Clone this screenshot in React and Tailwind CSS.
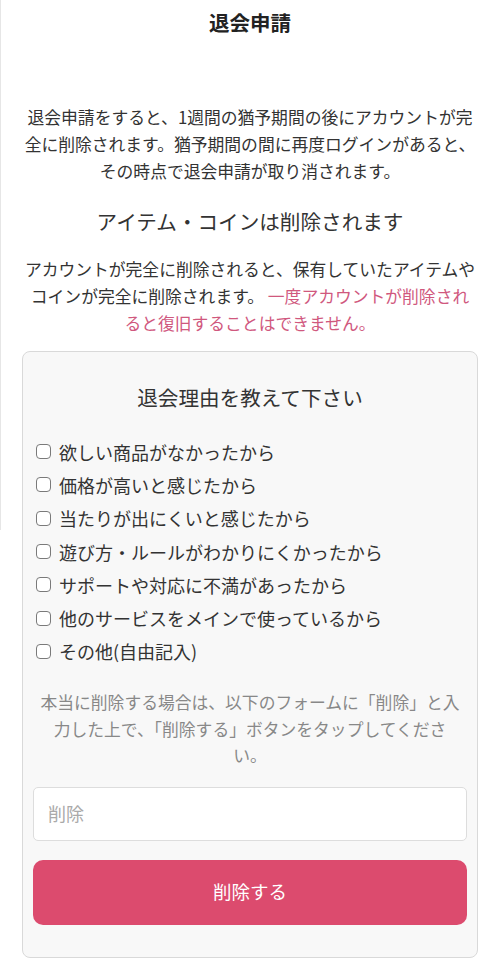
import React from "react";

const reasons = [
  "欲しい商品がなかったから",
  "価格が高いと感じたから",
  "当たりが出にくいと感じたから",
  "遊び方・ルールがわかりにくかったから",
  "サポートや対応に不満があったから",
  "他のサービスをメインで使っているから",
  "その他(自由記入)",
];

export default function App() {
  return (
    <div
      className="relative w-[500px] min-h-[961px] bg-white text-[#333]"
      style={{ fontFamily: '"Noto Sans CJK JP", "Noto Sans", sans-serif' }}
    >
      <div className="absolute left-0 top-0 w-px h-[530px] bg-[#e6e6e6]" />
      <h1 className="pt-[8px] text-center text-[20.5px] leading-[28px] font-bold text-[#222]">
        退会申請
      </h1>

      <p className="mt-[68px] px-[20px] text-center text-[16.8px] leading-[27px]">
        退会申請をすると、1週間の猶予期間の後にアカウントが完
        <br />
        全に削除されます。猶予期間の間に再度ログインがあると、
        <br />
        その時点で退会申請が取り消されます。
      </p>

      <h2 className="mt-[21px] text-center text-[20.6px] leading-[30px] font-normal text-[#333]">
        アイテム・コインは削除されます
      </h2>

      <p className="mt-[20px] px-[20px] text-center text-[16.8px] leading-[27px]">
        アカウントが完全に削除されると、保有していたアイテムや
        <br />
        コインが完全に削除されます。
        <span className="text-[#d0587e]">
          {" "}一度アカウントが削除され
          <br />
          ると復旧することはできません。
        </span>
      </p>

      <div className="mx-[22px] mt-[14px] mb-[3px] rounded-[8px] border border-[#d9d9d9] bg-[#f8f8f8] px-[10px] pt-[30px] pb-[32px]">
        <h3 className="text-center text-[20.6px] leading-[30px] font-normal text-[#333]">
          退会理由を教えて下さい
        </h3>

        <ul className="mt-[23px] flex flex-col">
          {reasons.map((r) => (
            <li key={r} className="flex h-[33.3px] items-center gap-[8px] pl-[3px]">
              <span className="h-[15px] w-[15px] shrink-0 rounded-[4px] border-[1.5px] border-[#7a7a7a] bg-white" />
              <span className="text-[18px] leading-[24px] text-[#333]">{r}</span>
            </li>
          ))}
        </ul>

        <p className="mt-[21px] px-[4px] text-center text-[16.8px] leading-[26.5px] text-[#888]">
          本当に削除する場合は、以下のフォームに「削除」と入
          <br />
          力した上で、「削除する」ボタンをタップしてくださ
          <br />
          い。
        </p>

        <div className="mt-[18px] flex h-[54px] items-center rounded-[5px] border border-[#ddd] bg-white px-[14px]">
          <span className="text-[18px] text-[#aaa]">削除</span>
        </div>

        <button className="mt-[19px] flex h-[65px] w-full items-center justify-center rounded-[10px] bg-[#dc4b6e] text-[18.5px] text-white">
          削除する
        </button>
      </div>
    </div>
  );
}
